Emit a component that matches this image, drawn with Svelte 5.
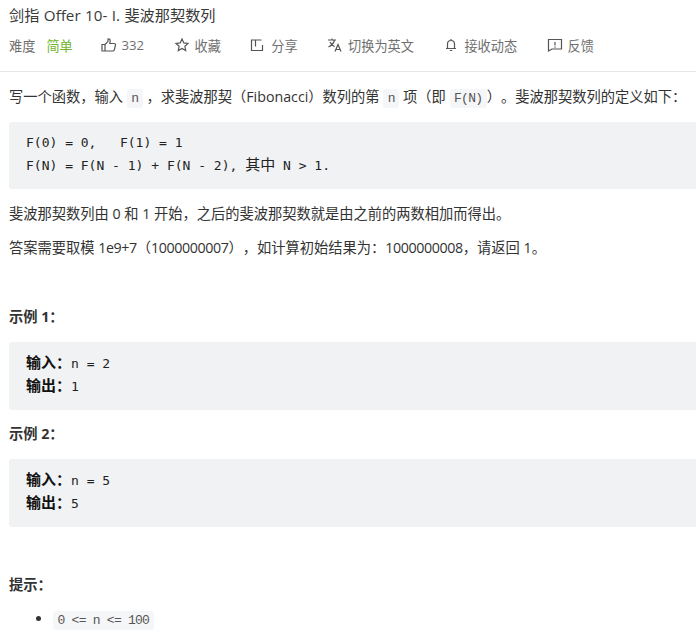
<script>
  const actions = [
    { label: '332', icon: 'like' },
    { label: '收藏', icon: 'star' },
    { label: '分享', icon: 'share' },
    { label: '切换为英文', icon: 'lang' },
    { label: '接收动态', icon: 'bell' },
    { label: '反馈', icon: 'note' }
  ];
</script>

<main class="page">
  <h1 class="title">剑指 Offer 10- I. 斐波那契数列</h1>

  <div class="meta">
    <span class="level">难度<em>简单</em></span>
    {#each actions as a}
      <span class="action">
        <svg width="16" height="16" viewBox="0 0 16 16" fill="none" stroke="#555" stroke-width="1.2">
          {#if a.icon === 'like'}
            <path d="M1 7.500h3v6.500H1zM4 7.500l3-3.200V2c1.300-.4 2.300.5 2.200 1.800L8.800 6.500h4.400c.9 0 1.500.8 1.300 1.600l-1.200 4.700c-.2.700-.8 1.200-1.500 1.200H4" />
          {:else if a.icon === 'star'}
            <path d="M8 2l1.800 3.900 4.200.5-3.100 2.900.8 4.200L8 11.400l-3.700 2.100.8-4.200L2 6.400l4.200-.5z" />
          {:else if a.icon === 'share'}
            <path d="M5.500 3H1.500v10.500h11V8M5.500 3v6.500M5.500 3h6" />
          {:else if a.icon === 'lang'}
            <path d="M1 3h8M5 1.500V3M7.500 3C6.800 6 4.500 8.500 1.500 10M3 5c1 2 2.800 3.800 4.500 4.800" />
            <path d="M8 14.500l3-7 3 7M9 12.500h4" />
          {:else if a.icon === 'bell'}
            <path d="M4.500 11.500V7c0-2 1.500-3.500 3.500-3.500S11.500 5 11.500 7v4.500zM3 11.500h10M8 2v1.500M6.800 13.500h2.400" />
          {:else}
            <path d="M1.500 2.500h13v9.500H5l-3.500 2zM8 5v3.500M8 9.500v1.200" />
          {/if}
        </svg>
        <span>{a.label}</span>
      </span>
    {/each}
  </div>

  <section class="content">
    <p>写一个函数，输入 <code>n</code> ，求斐波那契（Fibonacci）数列的第 <code>n</code> 项（即 <code>F(N)</code>）。斐波那契数列的定义如下：</p>
    <pre class="formula">F(0) = 0,   F(1) = 1
F(N) = F(N - 1) + F(N - 2), <span class="cjk">其中</span> N &gt; 1.</pre>
    <p>斐波那契数列由 0 和 1 开始，之后的斐波那契数就是由之前的两数相加而得出。</p>
    <p>答案需要取模 <span class="num">1e9+7</span>（<span class="num">1000000007</span>），如计算初始结果为：<span class="num">1000000008</span>，请返回 1。</p>
    <p class="head first"><strong>示例 1：</strong></p>
    <pre class="sample"><strong>输入：</strong>n = 2
<strong>输出：</strong>1</pre>
    <p class="head"><strong>示例 2：</strong></p>
    <pre class="sample second"><strong>输入：</strong>n = 5
<strong>输出：</strong>5</pre>
    <p class="head tips"><strong>提示：</strong></p>
    <ul>
      <li><code>0 &lt;= n &lt;= 100</code></li>
    </ul>
  </section>
</main>

<style>
  :global(body) {
    background: #fff;
    overflow: hidden;
  }

  .page {
    height: 633px;
    overflow: hidden;
    font-family: "Open Sans", "Noto Sans CJK SC", sans-serif;
    color: #262626;
    text-spacing-trim: space-all;
  }

  .title {
    margin: 0;
    padding: 6px 0 0 9px;
    font-size: 15.200px;
    font-weight: 400;
    line-height: 18px;
    word-spacing: 0.500px;
    color: #3a3a3a;
  }

  .meta {
    display: flex;
    align-items: center;
    height: 20px;
    margin-top: 11px;
    padding: 0 0 16px 9px;
    font-size: 13.200px;
    color: #6f6f6f;
    border-bottom: 1px solid #e6e6e6;
  }

  .level {
    width: 91.500px;
  }

  .level em {
    margin-left: 11px;
    font-style: normal;
    color: #6fb52c;
  }

  .action {
    display: flex;
    align-items: center;
    gap: 5px;
    margin-right: 29.400px;
  }

  .content {
    padding: 0 0 0 9px;
    font-size: 14.250px;
    color: #333;
  }

  p {
    margin: 0;
    line-height: 20px;
  }

  .content > p:first-child {
    margin-top: 15px;
  }

  .num {
    letter-spacing: -0.400px;
  }

  pre {
    margin: 15px 0 14px;
    padding: 10px 17px 12px;
    font-family: "DejaVu Sans Mono", "Noto Sans CJK SC", monospace;
    font-size: 13px;
    line-height: 23px;
    color: #222;
    background: #f1f2f4;
    border-radius: 3px 0 0 3px;
  }

  .formula {
    margin: 13px 0 15px;
    padding: 9px 17px 12px;
  }

  .cjk {
    font-size: 15px;
    line-height: 20px;
  }

  pre strong {
    font-size: 15px;
    line-height: 20px;
    color: #111;
  }

  code {
    padding: 2px 4.500px;
    font-family: "Liberation Mono", monospace;
    font-size: 13px;
    letter-spacing: -0.750px;
    color: #555;
    background: #f5f6f7;
    border-radius: 3px;
  }

  pre + p + p {
    margin-top: 14px;
  }

  .head {
    margin-top: 14px;
  }

  .head.first {
    margin-top: 49px;
  }

  .head.tips {
    margin-top: 48px;
  }

  ul {
    margin: 14px 0 0;
    padding-left: 44px;
    line-height: 20px;
  }
</style>
